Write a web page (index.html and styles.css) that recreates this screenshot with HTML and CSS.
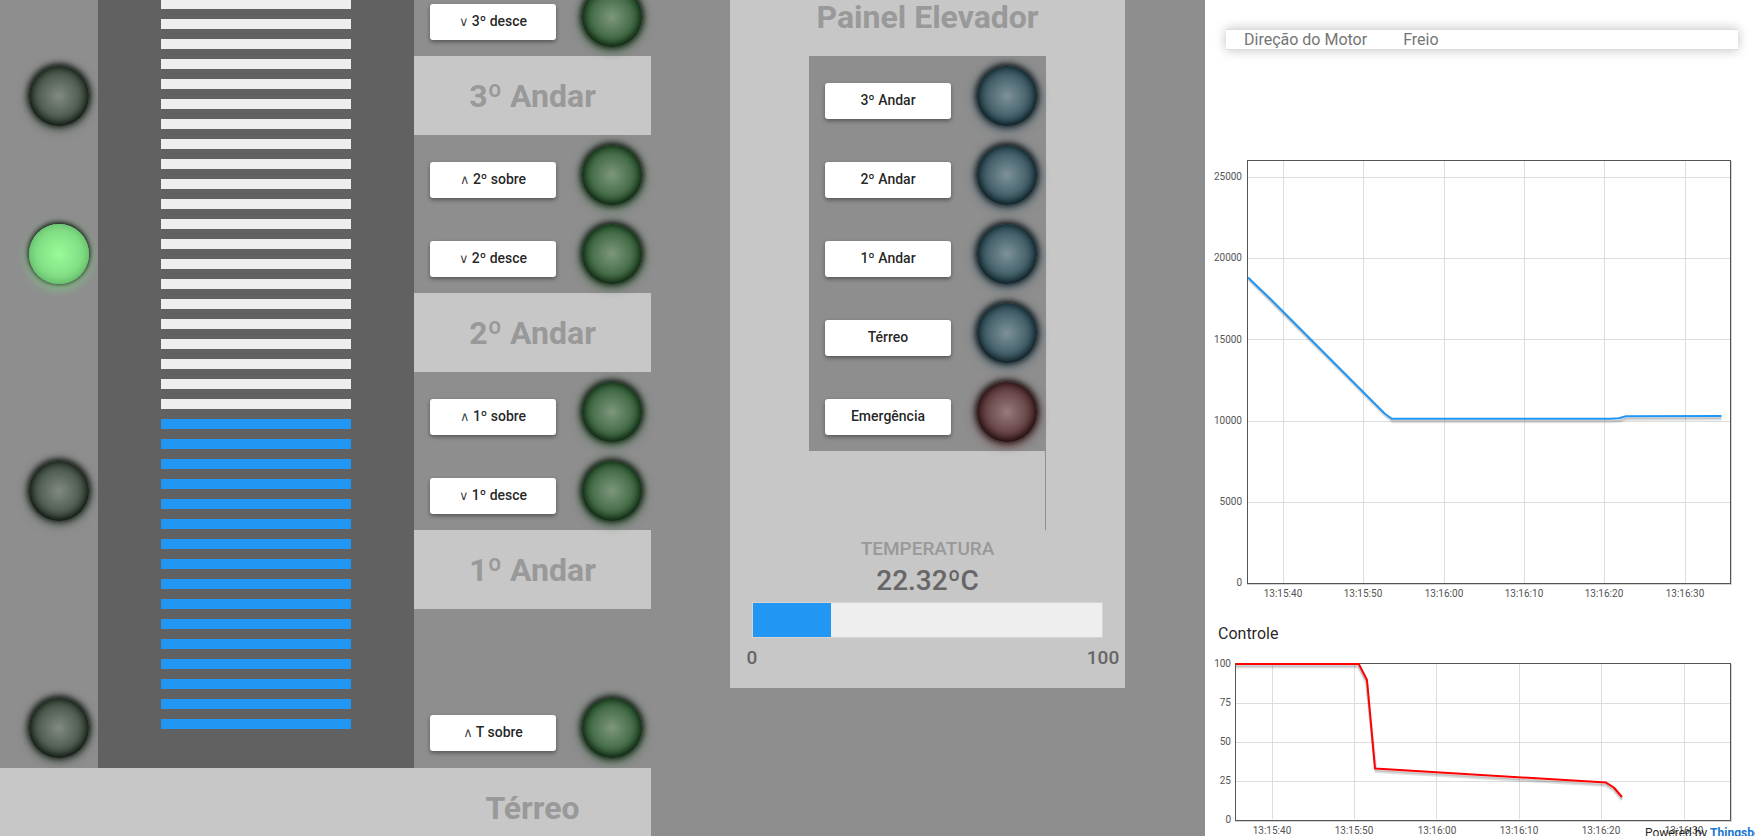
FILE: index.html
```html
<!DOCTYPE html>
<html lang="pt-BR">
<head>
<meta charset="utf-8">
<title>Painel Elevador</title>
<link rel="stylesheet" href="styles.css">
</head>
<body>
<main class="dashboard">
  <section class="building">
    <div class="sensors">
      <span class="lamp lamp-sensor floor-3"></span>
      <span class="lamp lamp-on floor-2"></span>
      <span class="lamp lamp-sensor floor-1"></span>
      <span class="lamp lamp-sensor floor-0"></span>
    </div>
    <div class="shaft">
      <div class="level level-empty"></div>
      <div class="level level-full"></div>
    </div>
    <div class="floors">
      <div class="call"><button class="btn" type="button"><span class="arrow">∨</span> 3º desce</button><span class="lamp lamp-green"></span></div>
      <h2 class="floor-name">3º Andar</h2>
      <div class="call"><button class="btn" type="button"><span class="arrow">∧</span> 2º sobre</button><span class="lamp lamp-green"></span></div>
      <div class="call"><button class="btn" type="button"><span class="arrow">∨</span> 2º desce</button><span class="lamp lamp-green"></span></div>
      <h2 class="floor-name">2º Andar</h2>
      <div class="call"><button class="btn" type="button"><span class="arrow">∧</span> 1º sobre</button><span class="lamp lamp-green"></span></div>
      <div class="call"><button class="btn" type="button"><span class="arrow">∨</span> 1º desce</button><span class="lamp lamp-green"></span></div>
      <h2 class="floor-name">1º Andar</h2>
      <div class="call call-ground"><button class="btn" type="button"><span class="arrow">∧</span> T sobre</button><span class="lamp lamp-green"></span></div>
    </div>
    <div class="ground"><h2 class="floor-name">Térreo</h2></div>
  </section>

  <section class="cabin">
    <div class="panel">
      <h2 class="floor-name">Painel Elevador</h2>
      <div class="keypad-area">
        <div class="keypad">
          <div class="call"><button class="btn" type="button">3º Andar</button><span class="lamp lamp-blue"></span></div>
          <div class="call"><button class="btn" type="button">2º Andar</button><span class="lamp lamp-blue"></span></div>
          <div class="call"><button class="btn" type="button">1º Andar</button><span class="lamp lamp-blue"></span></div>
          <div class="call"><button class="btn" type="button">Térreo</button><span class="lamp lamp-blue"></span></div>
          <div class="call"><button class="btn" type="button">Emergência</button><span class="lamp lamp-red"></span></div>
        </div>
        <div class="spacer"></div>
      </div>
      <div class="temperature">
        <div class="temp-title">TEMPERATURA</div>
        <div class="temp-value">22.32ºC</div>
        <div class="temp-bar"><div class="temp-fill" style="width:22.32%"></div></div>
        <div class="temp-scale"><span class="temp-limit">0</span><span class="temp-limit">100</span></div>
      </div>
    </div>
  </section>

  <section class="charts">
    <table class="status">
      <thead><tr><th scope="col">Direção do Motor</th><th scope="col">Freio</th></tr></thead>
    </table>

    <svg class="chart chart-position" viewBox="0 0 550 450" role="img" aria-label="Posição">
      <g class="grid">
        <path d="M78.5 11V433M158.5 11V433M239.5 11V433M319.5 11V433M399.5 11V433M480.5 11V433"/>
        <path d="M43 27.5H525M43 108.5H525M43 189.5H525M43 271.5H525M43 352.5H525"/>
      </g>
      <path class="edge" d="M526.5 11V434.5H42"/>
      <rect class="frame" x="42.5" y="10.5" width="483" height="423"/>
      <polyline class="shadow wide" points="44,130 67.5,153 180.6,266 187.8,271.7 405.8,271.7 414.8,271.3 422,269.3 516.5,269"/>
      <polyline class="shadow" points="43.5,129 67,152 180.6,265 187.8,270.5 405.8,270.5 414.8,270.2 422,268.2 516.5,268"/>
      <polyline class="line-blue" points="43,127.5 66.5,150 179.6,263.5 186.8,268.8 404.8,268.8 413.8,268.3 421,266.3 516.5,266"/>
      <g class="ticks end">
        <text x="37" y="30">25000</text><text x="37" y="111">20000</text><text x="37" y="193">15000</text><text x="37" y="274">10000</text><text x="37" y="355">5000</text><text x="37" y="436">0</text>
      </g>
      <g class="ticks mid">
        <text x="78" y="447">13:15:40</text><text x="158" y="447">13:15:50</text><text x="239" y="447">13:16:00</text><text x="319" y="447">13:16:10</text><text x="399" y="447">13:16:20</text><text x="480" y="447">13:16:30</text>
      </g>
    </svg>

    <h3 class="chart-title">Controle</h3>
    <svg class="chart" viewBox="0 0 550 190" role="img" aria-label="Controle">
      <g class="grid">
        <path d="M67.5 14V169M149.5 14V169M231.5 14V169M314.5 14V169M396.5 14V169M479.5 14V169"/>
        <path d="M31 53.5H525M31 92.5H525M31 131.5H525"/>
      </g>
      <path class="edge" d="M526.5 14V171.5H30"/>
      <rect class="frame" x="30.5" y="13.5" width="495" height="157"/>
      <polyline class="shadow wide" points="31,17 153.5,17 161.5,33 171,121.5 401,135.6 409,140.5 417,150"/>
      <polyline class="shadow" points="31,16 153.5,16 161.5,32 170.5,120.5 401,134.6 409,139.5 417,149"/>
      <polyline class="line-red" points="31,14 153.8,14 162,30 170,118.5 401,132.6 408.8,137.5 417,147"/>
      <g class="ticks end">
        <text x="26" y="17">100</text><text x="26" y="56">75</text><text x="26" y="95">50</text><text x="26" y="134">25</text><text x="26" y="173">0</text>
      </g>
      <g class="ticks mid">
        <text x="67" y="184">13:15:40</text><text x="149" y="184">13:15:50</text><text x="232" y="184">13:16:00</text><text x="314" y="184">13:16:10</text><text x="396" y="184">13:16:20</text><text x="479" y="184">13:16:30</text>
      </g>
    </svg>
    <div class="powered">Powered by <a href="#thingsboard">Thingsboard</a></div>
  </section>
</main>
</body>
</html>
```
FILE: styles.css
```css
* { box-sizing: border-box; }

body {
  margin: 0;
  font-family: Roboto, "Liberation Sans", sans-serif;
  color: rgba(0, 0, 0, 0.87);
  background: #8e8e8e;
}

h2, h3 { margin: 0; }

.dashboard {
  display: grid;
  grid-template-columns: 651fr 554fr 550fr;
  grid-template-rows: 100%;
  height: 100vh;
  overflow: hidden;
}

/* The board is scrolled part of one row past the top */
.building, .cabin { margin-top: -23px; }

.building {
  display: grid;
  grid-template-columns: 98fr 316fr 237fr;
  grid-template-rows: auto 79px;
  align-content: start;
}

.sensors {
  display: grid;
  grid-template-rows: repeat(10, 79px);
  justify-items: center;
  padding-left: 19px;
}
.floor-3 { grid-row: 2; }
.floor-2 { grid-row: 4; }
.floor-1 { grid-row: 7; }
.floor-0 { grid-row: 10; }

.shaft {
  display: flex;
  flex-direction: column;
  padding: 0 20% 39px;
  background: #616161;
}
.level-empty {
  flex: 1;
  background: repeating-linear-gradient(to top, #eee 0 10px, #616161 10px 20px);
}
.level-full {
  height: 320px;
  background: repeating-linear-gradient(to top, #2196f3 0 10px, #616161 10px 20px);
}

.call {
  display: grid;
  grid-template-columns: 2fr 1fr;
  justify-items: center;
  height: 79px;
}
.call-ground { margin-top: 79px; height: 80px; }

.btn {
  justify-self: stretch;
  height: 36px;
  margin: 27px 16px 0;
  padding: 0 0 2px;
  border: 0;
  border-radius: 3px;
  background: #fff;
  color: rgba(0, 0, 0, 0.87);
  font: 500 14px/34px Roboto, "Liberation Sans", sans-serif;
  white-space: nowrap;
  box-shadow: 0 2px 4px rgba(0, 0, 0, 0.4);
}
.arrow {
  color: rgba(0, 0, 0, 0.75);
  font-family: "DejaVu Sans", sans-serif;
  font-weight: 400;
  font-size: 13px;
  line-height: 1;
}

.lamp {
  width: 60px;
  height: 60px;
  margin-top: 10px;
  border-radius: 50%;
}
.lamp-sensor {
  background: radial-gradient(circle closest-side, #818a81, #3c4b3e);
  box-shadow: #111 0 -1px 6px 1px, inset #050a05 0 -1px 9px 1px, #3c503e 0 2px 12px;
}
.lamp-green {
  background: radial-gradient(circle closest-side, #7d977e, #2f5c33);
  box-shadow: #111 0 -1px 6px 1px, inset #061608 0 -1px 9px 1px, #1f5424 0 2px 12px;
}
.lamp-blue {
  background: radial-gradient(circle closest-side, #7d9299, #2e4d58);
  box-shadow: #111 0 -1px 6px 1px, inset #051216 0 -1px 9px 1px, #264858 0 2px 12px;
}
.lamp-red {
  background: radial-gradient(circle closest-side, #977b7d, #543032);
  box-shadow: #111 0 -1px 6px 1px, inset #160405 0 -1px 9px 1px, #582024 0 2px 12px;
}
.lamp-on {
  background: radial-gradient(circle closest-side, #98fb98, #7bd67f);
  box-shadow: #111 0 -1px 5px 1px, inset #5eb563 0 -1px 9px, #7fdc84 0 3px 12px;
}

.floor-name {
  height: 79px;
  background: #c7c7c7;
  color: #999;
  font-size: 32px;
  font-weight: 700;
  line-height: 80px;
  text-align: center;
  white-space: nowrap;
}

.ground {
  grid-column: 1 / -1;
  display: grid;
  grid-template-columns: 414fr 237fr;
  background: #c7c7c7;
}
.ground .floor-name { grid-column: 2; }

.cabin {
  display: grid;
  grid-template-columns: 79fr 395fr 80fr;
  align-items: start;
}
.panel { grid-column: 2; background: #c7c7c7; }
.keypad-area { padding: 0 20%; }
.keypad { background: #8e8e8e; }
.spacer { height: 79px; border-right: 1px solid #8e8e8e; }

.temperature {
  height: 158px;
  padding: 7px 22px 0;
  font-weight: 500;
  text-align: center;
}
.temp-title { color: #999; font-size: 19px; line-height: 24px; }
.temp-value { margin-bottom: 2px; color: #666; font-size: 28px; line-height: 39px; }
.temp-bar { height: 36px; border: 1px solid #d4d4d4; background: #eee; }
.temp-fill { height: 100%; background: #2196f3; }
.temp-scale {
  display: flex;
  justify-content: space-between;
  margin: 0 -20px;
  color: #666;
  font-size: 19px;
  line-height: 40px;
}
.temp-limit { width: 40px; }

.charts {
  position: relative;
  overflow: hidden;
  background: #fff;
  padding-top: 29px;
}

.status {
  width: calc(100% - 38px);
  margin-left: 21px;
  border-collapse: separate;
  border-spacing: 0;
  border-top: 1px solid #ddd;
  border-bottom: 1px solid #ddd;
  background: #fff;
  box-shadow: 0 0 12px rgba(0, 0, 0, 0.25);
}
.status th {
  padding: 0 18px;
  color: #757575;
  font-size: 16px;
  font-weight: 400;
  line-height: 19px;
  text-align: left;
  white-space: nowrap;
  width: 1px;
}
.status th:last-child { width: auto; }

.chart { display: block; width: 100%; height: auto; }
.chart-position { margin-top: 100px; }
.chart-title {
  padding: 23px 13px 6px;
  font-size: 16px;
  font-weight: 400;
  line-height: 21px;
}

.grid path { fill: none; stroke: #ddd; stroke-width: 1; }
.frame { fill: none; stroke: #545454; stroke-width: 1; }
.edge { fill: none; stroke: #d4d4d4; stroke-width: 1; }
.line-blue, .line-red, .shadow { fill: none; stroke-width: 2; stroke-linejoin: round; }
.line-blue { stroke: #2196f3; }
.line-red { stroke: #f00; }
.shadow { stroke: rgba(0, 0, 0, 0.12); }
.wide { stroke-width: 3; }
.ticks { font-size: 10px; fill: #545454; }
.end { text-anchor: end; }
.mid { text-anchor: middle; }

.powered {
  position: absolute;
  left: 80%;
  bottom: -5px;
  font-size: 12px;
  line-height: 16px;
  white-space: nowrap;
}
.powered a { color: #1976d2; font-weight: 700; text-decoration: none; }
```
